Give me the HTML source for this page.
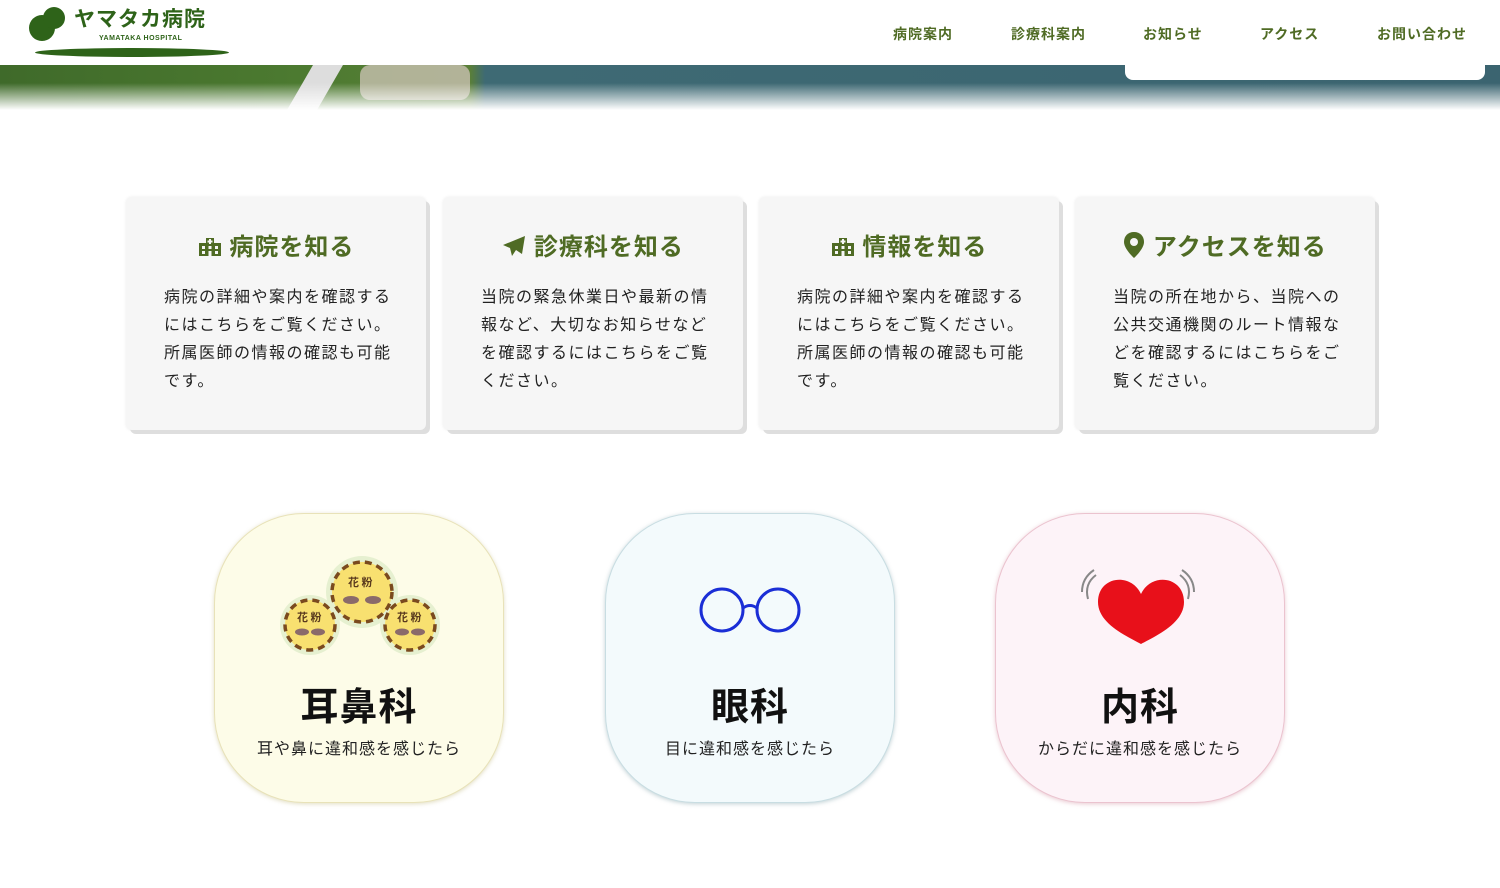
<!DOCTYPE html>
<html><head><meta charset="utf-8"><style>
*{margin:0;padding:0;box-sizing:border-box}
body{width:1500px;height:888px;background:#fff;font-family:"Liberation Sans","Noto Sans CJK JP",sans-serif;position:relative;overflow:hidden}
.hdr{position:absolute;left:0;top:0;width:1500px;height:65px;background:#fff;z-index:2}
.banner{position:absolute;left:0;top:65px;width:1500px;height:45px;background:linear-gradient(90deg,#3f6a2a 0,#4c7a30 300px,#5a7f38 470px,#3e6a74 485px,#3b6470 1500px)}
.banner:after{content:"";position:absolute;left:0;top:0;right:0;bottom:0;background:linear-gradient(180deg,rgba(255,255,255,0) 0,rgba(255,255,255,0) 40%,rgba(255,255,255,1) 100%)}
.nav{position:absolute;top:24px;font-size:14px;font-weight:bold;color:#4f6b24;letter-spacing:1px}
.card{position:absolute;top:197px;width:300px;height:233px;background:#f6f6f6;border-radius:6px;box-shadow:4px 4px 0 #dedede,0 0 3px rgba(0,0,0,.08)}
.card h3{position:absolute;top:30px;left:0;right:0;text-align:center;font-size:24px;color:#4f6b24;letter-spacing:1px}
.card p{position:absolute;top:87px;left:38px;width:232px;font-size:16px;line-height:28px;color:#222;letter-spacing:1.5px}
.circ{position:absolute;top:513px;width:290px;height:290px;border-radius:90px}
.circ h2{position:absolute;top:162px;left:0;right:0;text-align:center;font-size:38px;color:#111;letter-spacing:1px}
.circ p{position:absolute;top:221px;left:0;right:0;text-align:center;font-size:16px;color:#222;letter-spacing:1px}
</style></head><body>
<div class="banner">
<div style="position:absolute;left:300px;top:0;width:30px;height:45px;background:#ddd;transform:skewX(-30deg)"></div>
<div style="position:absolute;left:360px;top:0;width:110px;height:35px;background:#c8c0b0;border-radius:10px;opacity:.8"></div>
<div style="position:absolute;left:1125px;top:0;width:360px;height:15px;background:#fff;border-radius:0 0 8px 8px;z-index:1"></div>
</div>
<div class="hdr">
<svg style="position:absolute;left:28px;top:6px" width="40" height="36"><circle cx="14" cy="22" r="13" fill="#2e6319"/><circle cx="26" cy="12" r="11" fill="#2e6319"/></svg>
<div style="position:absolute;left:74px;top:6px;font-size:21px;font-weight:bold;color:#2e6319;letter-spacing:1px;line-height:28px">ヤマタカ病院</div>
<div style="position:absolute;left:99px;top:35px;font-size:7px;font-weight:bold;color:#2e6319;letter-spacing:.5px;line-height:8px">YAMATAKA HOSPITAL</div>
<div style="position:absolute;left:35px;top:48px;width:194px;height:9px;background:#2e6319;border-radius:50%"></div>
<div class="nav" style="left:893px">病院案内</div>
<div class="nav" style="left:1011px">診療科案内</div>
<div class="nav" style="left:1143px">お知らせ</div>
<div class="nav" style="left:1260px">アクセス</div>
<div class="nav" style="left:1377px">お問い合わせ</div>
</div>

<div class="card" style="left:126px"><h3><svg width="24" height="22" viewBox="0 0 24 22" style="vertical-align:-2px"><path d="M1 8h7V3h8v5h7v13H1z" fill="#4f6b24"/><g fill="#f6f6f6"><rect x="11" y="4" width="2" height="5"/><rect x="9.5" y="5.5" width="5" height="2"/><rect x="4" y="11" width="3" height="3"/><rect x="10.5" y="11" width="3" height="3"/><rect x="17" y="11" width="3" height="3"/><rect x="4" y="16" width="3" height="3"/><rect x="17" y="16" width="3" height="3"/><rect x="10.5" y="16" width="3" height="5"/></g></svg> 病院を知る</h3><p>病院の詳細や案内を確認するにはこちらをご覧ください。所属医師の情報の確認も可能です。</p></div>
<div class="card" style="left:443px"><h3><svg width="24" height="22" viewBox="0 0 24 22" style="vertical-align:-2px"><path d="M23 1L1 10l7 3 2 8 4-6 6 4z" fill="#4f6b24"/></svg> 診療科を知る</h3><p>当院の緊急休業日や最新の情報など、大切なお知らせなどを確認するにはこちらをご覧ください。</p></div>
<div class="card" style="left:759px"><h3><svg width="24" height="22" viewBox="0 0 24 22" style="vertical-align:-2px"><path d="M1 8h7V3h8v5h7v13H1z" fill="#4f6b24"/><g fill="#f6f6f6"><rect x="11" y="4" width="2" height="5"/><rect x="9.5" y="5.5" width="5" height="2"/><rect x="4" y="11" width="3" height="3"/><rect x="10.5" y="11" width="3" height="3"/><rect x="17" y="11" width="3" height="3"/><rect x="4" y="16" width="3" height="3"/><rect x="17" y="16" width="3" height="3"/><rect x="10.5" y="16" width="3" height="5"/></g></svg> 情報を知る</h3><p>病院の詳細や案内を確認するにはこちらをご覧ください。所属医師の情報の確認も可能です。</p></div>
<div class="card" style="left:1075px"><h3><svg width="22" height="28" viewBox="0 0 22 28" style="vertical-align:-4px"><path d="M11 1C5 1 1 5 1 11c0 7 10 16 10 16s10-9 10-16C21 5 17 1 11 1z" fill="#4f6b24"/><circle cx="11" cy="11" r="4" fill="#f6f6f6"/></svg> アクセスを知る</h3><p>当院の所在地から、当院への公共交通機関のルート情報などを確認するにはこちらをご覧ください。</p></div>

<div class="circ" style="left:214px;background:#fdfce8;border:1px solid #e8e2b8;box-shadow:0 1px 4px rgba(180,170,100,.4)">
<svg style="position:absolute;left:60px;top:36px" width="170" height="110">
<g fill="#e6f0d0"><circle cx="87" cy="42" r="36"/><circle cx="35" cy="75" r="30"/><circle cx="135" cy="75" r="30"/></g>
<g fill="#f8e070" stroke="#7a4a1e" stroke-width="3.5" stroke-dasharray="7 5"><circle cx="87" cy="42" r="30"/><circle cx="35" cy="75" r="25"/><circle cx="135" cy="75" r="25"/></g>
<g fill="#8a6a6a"><ellipse cx="76" cy="50" rx="8" ry="4"/><ellipse cx="98" cy="50" rx="8" ry="4"/><ellipse cx="27" cy="82" rx="7" ry="3.5"/><ellipse cx="43" cy="82" rx="7" ry="3.5"/><ellipse cx="127" cy="82" rx="7" ry="3.5"/><ellipse cx="143" cy="82" rx="7" ry="3.5"/></g>
<g font-size="11" font-weight="bold" fill="#5a3a1e" font-family="Noto Sans CJK JP"><text x="73" y="36">花 粉</text><text x="22" y="71">花 粉</text><text x="122" y="71">花 粉</text></g>
</svg>
<h2>耳鼻科</h2><p>耳や鼻に違和感を感じたら</p></div>
<div class="circ" style="left:605px;background:#f3fafc;border:1px solid #c8dde2;box-shadow:0 1px 4px rgba(100,140,150,.4)">
<svg style="position:absolute;left:90px;top:72px" width="110" height="50"><g fill="none" stroke="#1a2ed6" stroke-width="3"><circle cx="26" cy="24" r="21"/><circle cx="82" cy="24" r="21"/><path d="M47 22q7-5 14 0"/></g></svg>
<h2>眼科</h2><p>目に違和感を感じたら</p></div>
<div class="circ" style="left:995px;background:#fdf3f8;border:1px solid #ebc3cf;box-shadow:0 1px 4px rgba(200,120,140,.4)">
<svg style="position:absolute;left:80px;top:50px" width="130" height="90"><g fill="none" stroke="#888" stroke-width="2"><path d="M12 35q-4-15 8-24"/><path d="M6 28q0-14 12-22"/><path d="M112 35q4-15-8-24"/><path d="M118 28q0-14-12-22"/></g><path d="M65 30C55 8 22 12 22 38c0 20 24 32 43 42 19-10 43-22 43-42 0-26-33-30-43-8z" fill="#e8101a"/></svg>
<h2>内科</h2><p>からだに違和感を感じたら</p></div>
</body></html>
